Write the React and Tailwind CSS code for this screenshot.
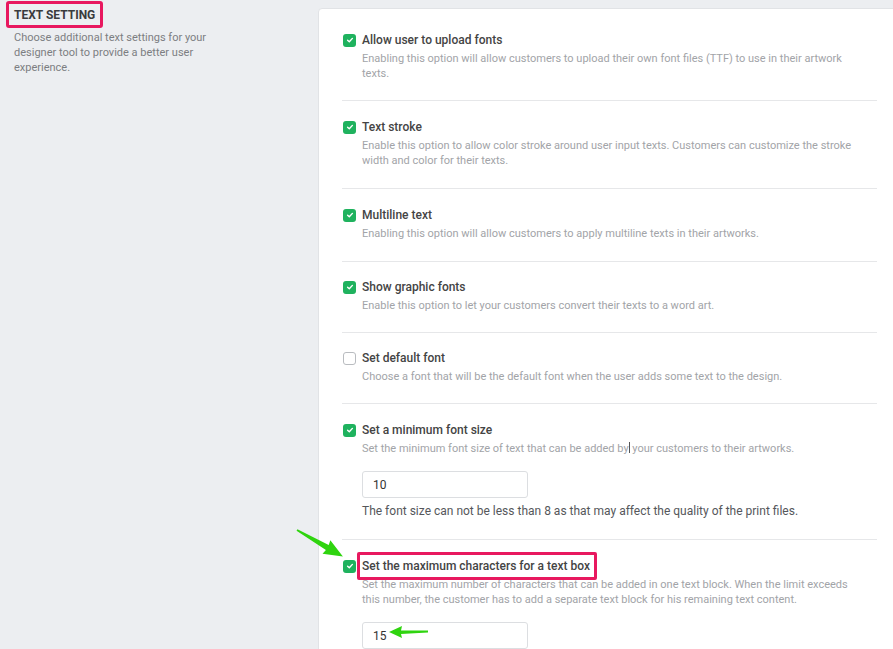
import React from 'react';

const font = { fontFamily: 'Roboto, "Liberation Sans", sans-serif' };

const Check = ({ checked }) =>
  checked ? (
    <span className="flex h-[13px] w-[13px] shrink-0 items-center justify-center rounded-[3px] bg-[#1fb25e]">
      <svg width="8" height="8" viewBox="0 0 8 8">
        <path d="M1.6 4.2 L3.3 5.8 L6.4 2.4" fill="none" stroke="#fff" strokeWidth="1.4" strokeLinecap="round" strokeLinejoin="round" />
      </svg>
    </span>
  ) : (
    <span className="block h-[13px] w-[13px] shrink-0 rounded-[3px] border border-[#b9bcc0] bg-white" />
  );

const items = [
  {
    title: 'Allow user to upload fonts',
    desc: 'Enabling this option will allow customers to upload their own font files (TTF) to use in their artwork texts.',
    checked: true,
    pad: 'pb-[19px] pt-[23px]',
  },
  {
    title: 'Text stroke',
    desc: 'Enable this option to allow color stroke around user input texts. Customers can customize the stroke width and color for their texts.',
    checked: true,
    pad: 'pb-[20px] pt-[18px]',
  },
  {
    title: 'Multiline text',
    desc: 'Enabling this option will allow customers to apply multiline texts in their artworks.',
    checked: true,
    pad: 'pb-[20px] pt-[18px]',
  },
  {
    title: 'Show graphic fonts',
    desc: 'Enable this option to let your customers convert their texts to a word art.',
    checked: true,
    pad: 'pb-[19px] pt-[17px]',
  },
  {
    title: 'Set default font',
    desc: 'Choose a font that will be the default font when the user adds some text to the design.',
    checked: false,
    pad: 'pb-[19px] pt-[17px]',
  },
];

function Row({ title, desc, checked, pad = 'pb-[20px] pt-[18px]', children, titleWrap }) {
  return (
    <div className={`border-b border-[#e6e7e9] ${pad}`}>
      <div className="flex items-center">
        <div className="ml-px mr-[6px]">
          <Check checked={checked} />
        </div>
        {titleWrap ? titleWrap : <span className="text-[12px] font-medium leading-4 text-[#444]">{title}</span>}
      </div>
      <p className="ml-[20px] mt-[3px] max-w-[505px] text-[11px] leading-[15px] text-[#a2a4a8]">{desc}</p>
      {children}
    </div>
  );
}

function Input({ value }) {
  return (
    <div className="ml-[20px] flex h-[27px] w-[166px] items-center rounded-[3px] border border-[#dcdee1] bg-white pl-[10px] text-[12px] text-[#333]">
      {value}
    </div>
  );
}

export default function App() {
  return (
    <div className="relative h-[649px] w-[893px] overflow-hidden bg-[#eceef1]" style={font}>
      <div className="flex">
        <div className="w-[318px] shrink-0 pl-[6px] pt-px">
          <div className="inline-flex h-[27px] items-center rounded-[3px] border-[3px] border-[#e8185f] px-[5px]">
            <span className="text-[12px] font-bold leading-4 text-[#3a3b3d]">TEXT SETTING</span>
          </div>
          <p className="ml-[8px] mt-[2px] w-[210px] text-[11px] leading-[15px] text-[#7c7e82]">
            Choose additional text settings for your designer tool to provide a better user experience.
          </p>
        </div>
        <div className="mt-[8px] w-[583px] shrink-0 rounded-[4px] border border-[#e1e3e6] bg-white px-[23px] pt-0">
          {items.map((it) => (
            <Row key={it.title} {...it} />
          ))}
          <Row
            title="Set a minimum font size"
            checked
            desc={
              <>
                Set the minimum font size of text that can be added by
                <span className="inline-block h-[11px] w-px translate-y-[1px] bg-[#555]" />
                {' '}your customers to their artworks.
              </>
            }
          >
            <div className="mt-[15px]">
              <Input value="10" />
            </div>
            <p className="ml-[20px] mt-[5px] text-[12px] leading-4 text-[#55575b]">
              The font size can not be less than 8 as that may affect the quality of the print files.
            </p>
          </Row>
          <Row
            checked
            titleWrap={
              <span className="relative text-[12px] font-medium leading-4 text-[#444]">
                Set the maximum characters for a text box
                <span className="absolute -bottom-[6px] -left-[5px] -right-[7px] -top-[6px] rounded-[2px] border-[3px] border-[#e8185f]" />
              </span>
            }
            desc="Set the maximum number of characters that can be added in one text block. When the limit exceeds this number, the customer has to add a separate text block for his remaining text content."
          >
            <div className="mt-[15px]">
              <Input value="15" />
            </div>
          </Row>
        </div>
      </div>

      <svg className="absolute left-[290px] top-[522px]" width="60" height="40" viewBox="0 0 60 40">
        <g transform="translate(7 8) rotate(30)">
          <polygon points="0,-0.9 35,-2.8 34,-7.8 53,0 34,7.8 35,2.8 0,0.9" fill="#2fd40f" />
        </g>
      </svg>
      <svg className="absolute left-[387px] top-[624px]" width="44" height="18" viewBox="0 0 44 18">
        <polygon points="2,8 15,2 14,6.5 41,6.5 41,8.5 14,10 15,14" fill="#2fd40f" />
      </svg>
    </div>
  );
}
